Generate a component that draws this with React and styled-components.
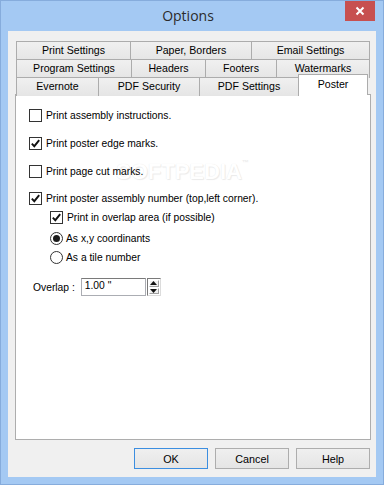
import React from 'react';
import styled, { createGlobalStyle } from 'styled-components';

const GlobalStyle = createGlobalStyle`
  html, body { margin: 0; padding: 0; background: #ffffff; }
  * { box-sizing: border-box; }
`;

const tabRows = [
  [
    { label: 'Print Settings', w: 115 },
    { label: 'Paper, Borders', w: 122 },
    { label: 'Email Settings', w: 119 },
  ],
  [
    { label: 'Program Settings', w: 116 },
    { label: 'Headers', w: 75 },
    { label: 'Footers', w: 72 },
    { label: 'Watermarks', w: 94 },
  ],
  [
    { label: 'Evernote', w: 83 },
    { label: 'PDF Security', w: 102 },
    { label: 'PDF Settings', w: 100 },
    { label: 'Poster', w: 70, active: true },
  ],
];

function CheckMark() {
  return (
    <svg width="11" height="11" viewBox="0 0 11 11">
      <path d="M1.8 5.6 L4.3 8.2 L9.2 2.2" fill="none" stroke="#111" strokeWidth="1.9" />
    </svg>
  );
}

function Check({ checked, label, top, indent }) {
  return (
    <OptionRow top={top} indent={indent}>
      <Box>{checked && <CheckMark />}</Box>
      <OptionText>{label}</OptionText>
    </OptionRow>
  );
}

function Radio({ checked, label, top, indent }) {
  return (
    <OptionRow top={top} indent={indent}>
      <RadioCircle>{checked && <RadioDot />}</RadioCircle>
      <OptionText gap={3}>{label}</OptionText>
    </OptionRow>
  );
}

export default function App() {
  return (
    <>
      <GlobalStyle />
      <Window>
        <TitleBar>
          <span />
          <Title>Options</Title>
          <CloseButton>
            <svg width="10" height="10" viewBox="0 0 10 10">
              <path d="M1.5 1.5 L8.5 8.5 M8.5 1.5 L1.5 8.5" stroke="#fff" strokeWidth="2" />
            </svg>
          </CloseButton>
        </TitleBar>
        <Client>
          <TabStrip>
            {tabRows.map((row, i) => (
              <TabRow key={i} last={i === tabRows.length - 1}>
                {row.map((t, j) => (
                  <Tab key={j} w={t.w} active={t.active}>
                    {t.label}
                  </Tab>
                ))}
              </TabRow>
            ))}
          </TabStrip>
          <Panel>
            <Watermark aria-hidden="true">
              SOFTPEDIA<sup>™</sup>
            </Watermark>
            <Check label="Print assembly instructions." top={14} />
            <Check checked label="Print poster edge marks." top={15} />
            <Check label="Print page cut marks." top={15} />
            <Check checked label="Print poster assembly number (top,left corner)." top={14} />
            <Check checked label="Print in overlap area (if possible)" top={6} indent={21} />
            <Radio checked label="As x,y coordinants" top={8} indent={21} />
            <Radio label="As a tile number" top={6} indent={21} />
            <OverlapRow>
              <span>Overlap :</span>
              <ValueBox>1.00 "</ValueBox>
              <Spinner>
                <SpinHalf>
                  <svg width="7" height="4" viewBox="0 0 7 4"><path d="M0 4 L3.5 0 L7 4 Z" fill="#111" /></svg>
                </SpinHalf>
                <SpinHalf>
                  <svg width="7" height="4" viewBox="0 0 7 4"><path d="M0 0 L3.5 4 L7 0 Z" fill="#111" /></svg>
                </SpinHalf>
              </Spinner>
            </OverlapRow>
          </Panel>
          <ButtonBar>
            <Button primary>OK</Button>
            <Button>Cancel</Button>
            <Button>Help</Button>
          </ButtonBar>
        </Client>
      </Window>
    </>
  );
}

const Window = styled.div`
  width: 384px;
  height: 485px;
  border: 1px solid #86acdc;
  background: #a4c9f3;
  display: flex;
  flex-direction: column;
  padding: 0 7px 7px 7px;
  font-family: "Liberation Sans", Arial, sans-serif;
  font-size: 10.3px;
  color: #000;
`;

const TitleBar = styled.div`
  height: 30px;
  display: grid;
  grid-template-columns: 1fr auto 1fr;
  margin: 0 -7px;
  padding-right: 8px;
`;

const Title = styled.div`
  font-family: "Open Sans", "Noto Sans", sans-serif;
  font-size: 14px;
  color: #2b2b2b;
  line-height: 30px;
`;

const CloseButton = styled.div`
  justify-self: end;
  width: 30px;
  height: 20px;
  background: #c75050;
  display: flex;
  align-items: center;
  justify-content: center;
`;

const Client = styled.div`
  flex: 1;
  background: #f0f0f0;
  padding: 10px 5px 0 7px;
  display: flex;
  flex-direction: column;
`;

const TabStrip = styled.div`
  display: flex;
  flex-direction: column;
  padding: 0 1px;
`;

const TabRow = styled.div`
  display: flex;
  height: ${p => (p.last ? 17 : 18)}px;
`;

const Tab = styled.div`
  width: ${p => p.w}px;
  flex: none;
  height: ${p => (p.active ? 21 : 19)}px;
  margin-top: ${p => (p.active ? -3 : 0)}px;
  border: 1px solid #acacac;
  border-bottom: none;
  background: ${p => (p.active ? '#ffffff' : 'linear-gradient(#f0f0f0, #e5e5e5)')};
  position: relative;
  z-index: ${p => (p.active ? 3 : 1)};
  display: flex;
  justify-content: center;
  padding-top: ${p => (p.active ? 3 : 2)}px;
  font-size: 10.6px;
  white-space: nowrap;
  & + & { margin-left: -1px; }
`;

const Panel = styled.div`
  position: relative;
  height: 346px;
  background: #ffffff;
  border: 1px solid #adadad;
  display: flex;
  flex-direction: column;
  padding-left: 13px;
`;

const OptionRow = styled.div`
  position: relative;
  z-index: 1;
  display: flex;
  align-items: center;
  height: 13px;
  margin-top: ${p => p.top}px;
  margin-left: ${p => p.indent || 0}px;
`;

const Box = styled.div`
  width: 13px;
  height: 13px;
  border: 1px solid #333333;
  background: #fff;
  display: flex;
  align-items: center;
  justify-content: center;
`;

const RadioCircle = styled.div`
  width: 13px;
  height: 13px;
  border: 1px solid #333333;
  border-radius: 50%;
  background: #fff;
  display: flex;
  align-items: center;
  justify-content: center;
`;

const RadioDot = styled.div`
  width: 7px;
  height: 7px;
  border-radius: 50%;
  background: #1c1c1c;
`;

const OptionText = styled.span`
  margin-left: ${p => p.gap || 4}px;
  white-space: nowrap;
`;

const OverlapRow = styled.div`
  display: flex;
  align-items: center;
  margin-top: 14px;
  margin-left: 4px;
  height: 18px;
`;

const ValueBox = styled.div`
  width: 65px;
  height: 18px;
  margin-left: 6px;
  border: 1px solid #abadb3;
  border-top-color: #7a7a7a;
  padding: 1px 0 0 3px;
  background: #fff;
`;

const Spinner = styled.div`
  width: 14px;
  height: 18px;
  margin-left: 1px;
  border: 1px solid #7a7a7a;
  border-right-color: #dcdcdc;
  border-bottom-color: #dcdcdc;
  display: flex;
  flex-direction: column;
  padding: 1px;
  gap: 1px;
`;

const SpinHalf = styled.div`
  flex: 1;
  background: #f0f0f0;
  border: 1px solid #fff;
  border-right-color: #a0a0a0;
  border-bottom-color: #a0a0a0;
  display: flex;
  align-items: center;
  justify-content: center;
`;

const Watermark = styled.div`
  position: absolute;
  left: 100px;
  top: 64px;
  font-family: "Liberation Sans", Arial, sans-serif;
  font-size: 22px;
  font-weight: bold;
  color: #ffffff;
  text-shadow: 0 0 1px #e4e4e4, 1px 1px 1px #ececec;
  pointer-events: none;
  sup { font-size: 7px; vertical-align: top; color: #ececec; text-shadow: none; }
`;

const ButtonBar = styled.div`
  display: flex;
  justify-content: flex-end;
  gap: 7px;
  margin-top: 8px;
  padding-right: 1px;
`;

const Button = styled.div`
  width: 74px;
  height: 21px;
  border: 1px solid ${p => (p.primary ? '#3c8ee0' : '#adadad')};
  background: linear-gradient(#efefef, #e5e5e5);
  display: flex;
  align-items: center;
  justify-content: center;
  font-size: 10.8px;
`;
